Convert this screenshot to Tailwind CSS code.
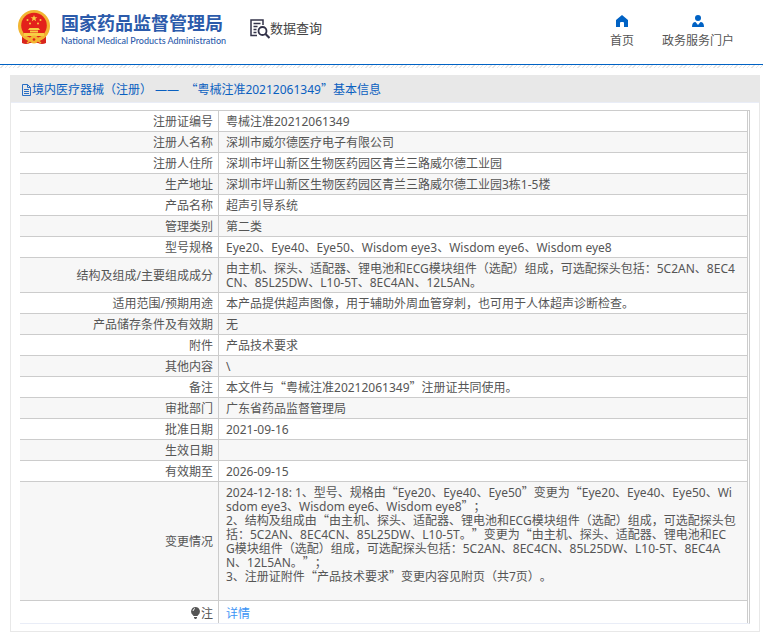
<!doctype html>
<html lang="zh-CN">
  <head>
    <meta charset="utf-8" />
    <title>数据查询</title>
    <script src="https://cdn.jsdelivr.net/npm/@tailwindcss/browser@4"></script>
  </head>
  <body class="min-h-screen bg-white font-['Noto_Sans','Noto_Sans_CJK_SC',sans-serif] text-xs text-[#555] [text-spacing-trim:space-all]">
    <!-- Header -->
    <header class="flex h-[65px] items-start justify-between border-b border-[#0062c4] pr-[29px] pl-[17px]">
      <div class="flex items-start">
        <a href="#" class="flex items-start gap-2.5 pt-2.5 text-[#2c5bab]">
          <svg class="h-[35px] w-[34px]" viewBox="0 0 34 35">
            <path d="M5 24L5 33Q9 35 13 33L21 33Q25 35 29 33L29 24Z" fill="#d9251d" />
            <circle cx="17" cy="16" r="16" fill="#f2b632" />
            <circle cx="17" cy="15.500" r="12.800" fill="#e3221b" />
            <path d="M17 5l.9 2.300h2.500l-2 1.500.7 2.400-2.100-1.400-2.100 1.400.7-2.400-2-1.500h2.500z" fill="#f8cf45" />
            <g fill="#f8cf45">
              <circle cx="10.500" cy="10" r="1" />
              <circle cx="23.500" cy="10" r="1" />
              <circle cx="13" cy="13.500" r="1" />
              <circle cx="21" cy="13.500" r="1" />
              <path d="M12.500 18h9l1.500 2H11zM13 20.500h8v2h-8zM7 23h20v3H7z" />
            </g>
            <path d="M6 26q5 5 8 2M28 26q-5 5-8 2M10 33l4-3M24 33l-4-3" stroke="#f2b632" stroke-width="1.500" fill="none" />
            <circle cx="17" cy="29.500" r="4" fill="#f2b632" />
            <circle cx="17" cy="29.500" r="1.300" fill="#e3221b" />
          </svg>
          <span class="block">
            <span class="block font-['Noto_Sans_CJK_SC',sans-serif] text-lg leading-[25px] font-bold">国家药品监督管理局</span>
            <span class="block font-['Lato',sans-serif] text-[9px] leading-[11px] font-medium">National Medical Products Administration</span>
          </span>
        </a>
        <a href="#" class="ml-6 flex items-center pt-[17px] text-[#444]">
          <svg class="mt-0.5 h-5 w-5" viewBox="0 0 20 20" fill="none" stroke="#33334a" stroke-width="1.500">
            <path d="M7 16.500H1V1h12v5M3.500 4.500h7M3.500 7.500h4M3.500 10.500h3M3.500 13.500h3" />
            <circle cx="12.500" cy="12" r="4" stroke-width="1.800" />
            <path d="M15.500 15l4 4" stroke-width="2.200" />
          </svg>
          <span class="text-[13px] leading-[22px]">数据查询</span>
        </a>
      </div>
      <nav class="flex gap-7 pt-[15px]">
        <a href="#" class="flex flex-col items-center">
          <svg class="h-3 w-3" viewBox="0 0 12 12" fill="#0062c4"><path d="M6 0L0 5v7h4V8q0-1 1-1h2q1 0 1 1v4h4V5z" /></svg>
          <span class="mt-[5px] leading-[18px]">首页</span>
        </a>
        <a href="#" class="flex flex-col items-center">
          <svg class="h-3 w-3" viewBox="0 0 12 12" fill="#0062c4"><circle cx="6" cy="3" r="3" /><path d="M0 12q0-5 3.500-5L6 10l2.500-3Q12 7 12 12z" /></svg>
          <span class="mt-[5px] leading-[18px]">政务服务门户</span>
        </a>
      </nav>
    </header>
    <div class="h-[3px] bg-[repeating-linear-gradient(135deg,#fff_0px,#fff_2px,#e6e6e6_2px,#e6e6e6_3px)]"></div>

    <!-- Detail panel -->
    <main class="mt-[7px] mr-[3px] mb-1 ml-2.5 border border-t-0 border-[#e8e8e8]">
      <h1 class="flex h-7 items-center border-b border-[#e9edf7] bg-[#e8e8e8] pt-0.5 pl-2.5 text-[#0a60c0]">
        <svg class="h-3 w-[11px]" viewBox="0 0 11 12" fill="none" stroke="#2a6fc4"><path d="M1.500.500h5l3 3v8h-8zM6.500.500v3h3M3 5.500h5M3 7.500h5M3 9.500h5" /></svg>
        <span>境内医疗器械（注册） ——&nbsp;&nbsp;<span class="font-['Noto_Sans_CJK_SC',sans-serif] leading-[8px]">“</span>粤械注准20212061349<span class="font-['Noto_Sans_CJK_SC',sans-serif] leading-[8px]">”</span>基本信息</span>
      </h1>
      <div class="mt-[7px] mr-[9px] mb-[7px] ml-[9px] border-t border-r border-b border-t-[#ccc] border-r-[#ccc] border-b-[#e9edf7] pr-px">
        <table class="w-full border-separate border-spacing-0 leading-[14px] break-all">
          <tbody id="rows"></tbody>
        </table>
      </div>
    </main>

    <script>
      const rows = [
        ["注册证编号", "粤械注准20212061349"],
        ["注册人名称", "深圳市威尔德医疗电子有限公司"],
        ["注册人住所", "深圳市坪山新区生物医药园区青兰三路威尔德工业园"],
        ["生产地址", "深圳市坪山新区生物医药园区青兰三路威尔德工业园3栋1-5楼"],
        ["产品名称", "超声引导系统"],
        ["管理类别", "第二类"],
        ["型号规格", "Eye20、Eye40、Eye50、Wisdom eye3、Wisdom eye6、Wisdom eye8"],
        ["结构及组成/主要组成成分", "由主机、探头、适配器、锂电池和ECG模块组件（选配）组成，可选配探头包括：5C2AN、8EC4<br>CN、85L25DW、L10-5T、8EC4AN、12L5AN。"],
        ["适用范围/预期用途", "本产品提供超声图像，用于辅助外周血管穿刺，也可用于人体超声诊断检查。"],
        ["产品储存条件及有效期", "无"],
        ["附件", "产品技术要求"],
        ["其他内容", "\\"],
        ["备注", "本文件与“粤械注准20212061349”注册证共同使用。"],
        ["审批部门", "广东省药品监督管理局"],
        ["批准日期", "2021-09-16"],
        ["生效日期", "&nbsp;"],
        ["有效期至", "2026-09-15"],
        ["变更情况", "2024-12-18: 1、型号、规格由“Eye20、Eye40、Eye50”变更为“Eye20、Eye40、Eye50、Wi<br>sdom eye3、Wisdom eye6、Wisdom eye8”；<br>2、结构及组成由“由主机、探头、适配器、锂电池和ECG模块组件（选配）组成，可选配探头包<br>括：5C2AN、8EC4CN、85L25DW、L10-5T。”变更为“由主机、探头、适配器、锂电池和EC<br>G模块组件（选配）组成，可选配探头包括：5C2AN、8EC4CN、85L25DW、L10-5T、8EC4A<br>N、12L5AN。”；<br>3、注册证附件“产品技术要求”变更内容见附页（共7页）。<br>&nbsp;"],
      ];

      // Curly quotes take the full-width form of the CJK font
      const wide = (text) =>
        text.replace(/[“”]/g, (q) => `<span class="font-['Noto_Sans_CJK_SC',sans-serif] leading-[8px]">${q}</span>`);

      const bulb = `<svg class="mr-px inline-block h-3 w-[9px] align-[-1px]" viewBox="0 0 9 12" fill="#555"><path d="M4.500 0a4.500 4.500 0 0 1 2.700 8L6.500 9h-4L1.800 8A4.500 4.500 0 0 1 4.500 0zM3 10h3v1L5 12H4L3 11z"/><path d="M2 4q.3-2 2-2.500" stroke="#fff" fill="none"/></svg>`;

      document.getElementById("rows").innerHTML =
        rows
          .map(
            ([label, value]) => `
              <tr class="even:bg-[#f7f7f7]">
                <th scope="row" class="w-[199px] border-r border-b border-[#ccc] pt-1 pr-[5px] pb-0.5 text-right font-normal">${label}</th>
                <td class="border-r border-b border-[#ccc] pt-1 pb-0.5 pl-[7px]">${wide(value)}</td>
              </tr>`,
          )
          .join("") +
        `
              <tr class="h-[22px]">
                <th scope="row" class="w-[199px] border-r border-[#ccc] pt-1 pr-[5px] text-right font-normal">${bulb}注</th>
                <td class="border-r border-[#ccc] pt-1 pl-[7px]"><a href="#" class="text-[#3c94f5]">详情</a></td>
              </tr>`;
    </script>
  </body>
</html>
